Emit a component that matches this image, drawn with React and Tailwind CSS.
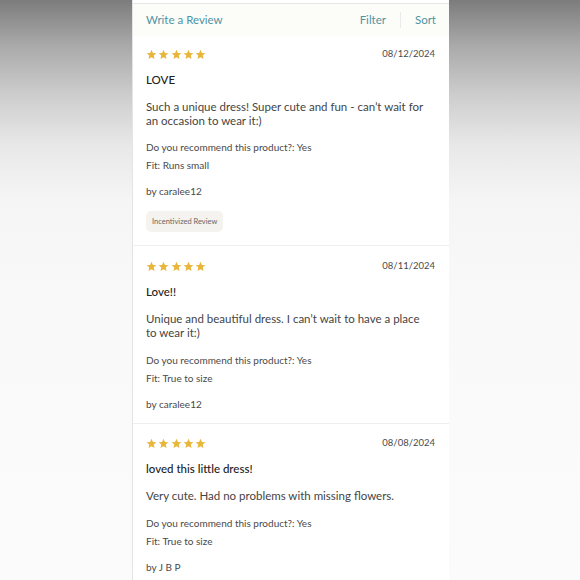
import React from "react";

function Stars() {
  return (
    <div className="flex h-[14px] items-center gap-[1.25px]">
      {[0, 1, 2, 3, 4].map((i) => (
        <svg key={i} width="11" height="11" viewBox="0 0 24 24">
          <path
            d="M12 1.8l3.1 6.9 7.4.7-5.6 5 1.7 7.4L12 17.9l-6.6 3.9 1.7-7.4-5.6-5 7.4-.7z"
            fill="#e9b63c"
          />
        </svg>
      ))}
    </div>
  );
}

function Review({ date, title, body, fit, by, badge, first, last }) {
  return (
    <div
      className={`${first ? "pt-[11px]" : last ? "pt-[12px]" : "pt-[13px]"} ${badge ? "pb-[13px]" : "pb-[12px]"} px-[13px] ${last ? "" : "border-b border-[#efefef]"}`}
    >
      <div className="flex items-center justify-between">
        <Stars />
        <div className="text-[9.5px] leading-[14px] text-[#4a4a4a] pr-px">{date}</div>
      </div>
      <div className="mt-[11px] text-[11.5px] leading-[16px] font-medium text-[#222]">{title}</div>
      <div className="mt-[12px] text-[11.5px] leading-[14px] text-[#444]">
        {body.map((l, i) => (
          <div key={i}>{l}</div>
        ))}
      </div>
      <div className={`${first ? "mt-[12px]" : "mt-[13px]"} text-[10px] leading-[14px] text-[#4a4a4a]`}>
        Do you recommend this product?: Yes
      </div>
      <div className="mt-[4px] text-[10px] leading-[14px] text-[#4a4a4a]">Fit: {fit}</div>
      <div className="mt-[12px] text-[10px] leading-[14px] text-[#4a4a4a]">by {by}</div>
      {badge && (
        <div className="mt-[13px] inline-flex h-[21px] items-center rounded-[5px] bg-[#f4f3ef] px-[6px] text-[7.5px] text-[#666]">
          Incentivized Review
        </div>
      )}
    </div>
  );
}

export default function App() {
  return (
    <div
      className="min-h-[580px] h-[580px] overflow-hidden bg-[linear-gradient(to_bottom,#7c7c7c_0px,#a9a9a9_45px,#cdcdcd_95px,#e8e8e8_145px,#f5f5f5_200px,#f9f9f9_300px,#fbfbfb_580px)]"
      style={{ fontFamily: "Lato, 'Noto Sans', sans-serif" }}
    >
      <div className="ml-[133px] w-[316px] h-[580px] bg-white shadow-[-1px_0_0_#e4e4e4]">
        <div className="h-[4px] bg-white border-b border-[#e6e6e6]" />
        <div className="h-[32px] bg-[#fcfdf8] flex items-center justify-between px-[13px] text-[11.5px] text-[#4f93a4]">
          <span>Write a Review</span>
          <div className="flex items-center">
            <span>Filter</span>
            <span className="mx-[14px] h-[16px] w-px bg-[#ebebeb]" />
            <span>Sort</span>
          </div>
        </div>
        <Review
          first
          badge
          date="08/12/2024"
          title="LOVE"
          body={["Such a unique dress! Super cute and fun - can\u2019t wait for", "an occasion to wear it:)"]}
          fit="Runs small"
          by="caralee12"
        />
        <Review
          date="08/11/2024"
          title="Love!!"
          body={["Unique and beautiful dress. I can\u2019t wait to have a place", "to wear it:)"]}
          fit="True to size"
          by="caralee12"
        />
        <Review
          last
          date="08/08/2024"
          title="loved this little dress!"
          body={["Very cute. Had no problems with missing flowers."]}
          fit="True to size"
          by="J B P"
        />
      </div>
    </div>
  );
}
